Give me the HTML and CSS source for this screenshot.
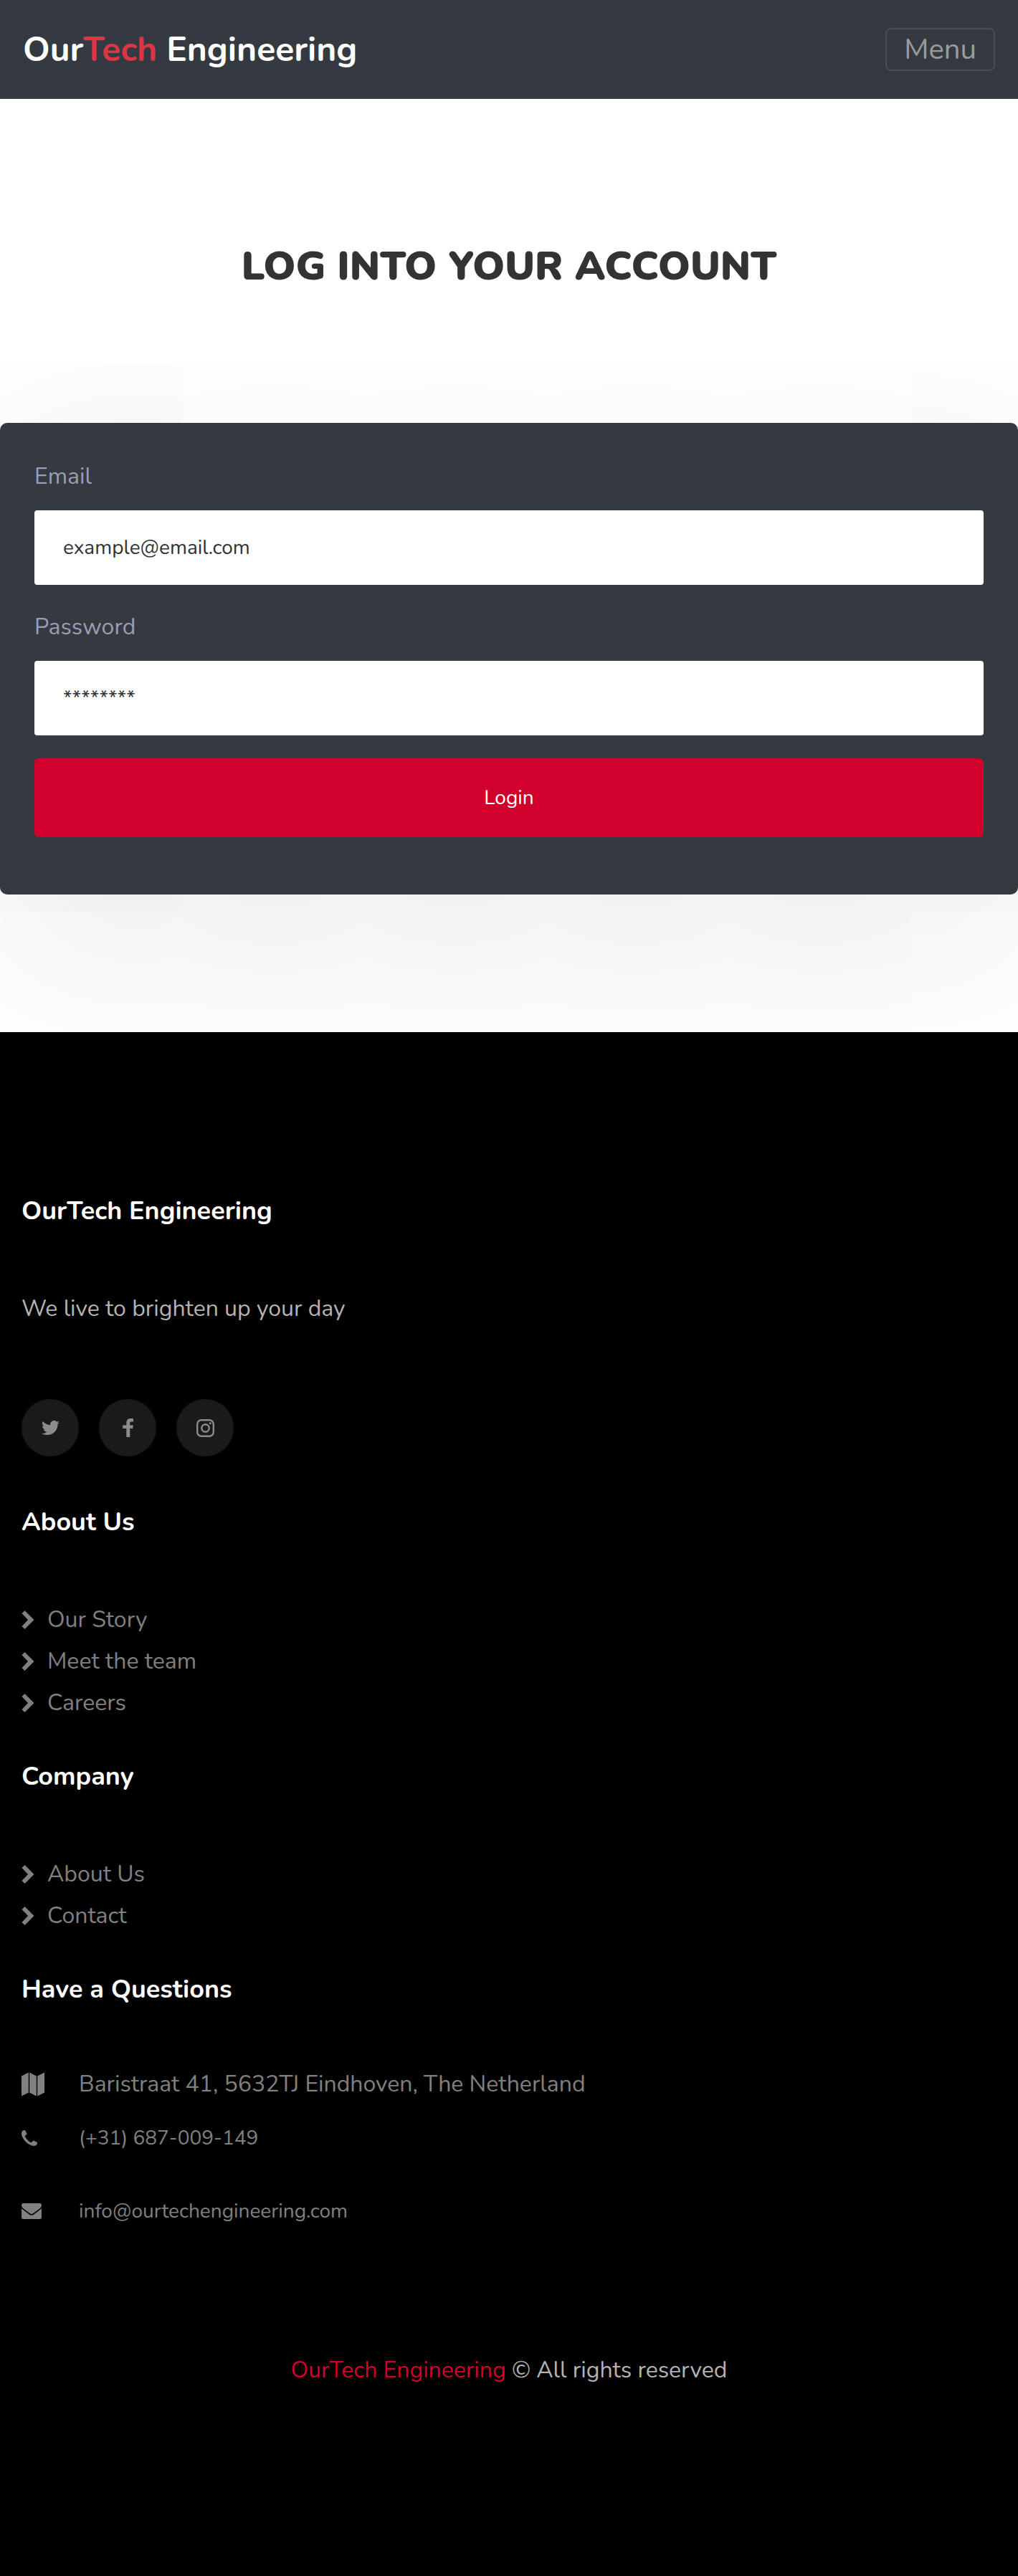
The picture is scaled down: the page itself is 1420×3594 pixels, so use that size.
FILE: index.html
```html
<!DOCTYPE html>
<html lang="en">
<head>
  <meta charset="utf-8">
  <meta name="viewport" content="width=device-width, initial-scale=1">
  <title>OurTech Engineering – Login</title>
  <link rel="stylesheet" href="styles.css">
</head>
<body>
  <svg class="sprite" aria-hidden="true">
    <symbol id="chevron" viewBox="0 0 17 26"><path d="M0 4 4 0 17 13 4 26 0 22 8.500 13z"/></symbol>
  </svg>

  <header class="navbar">
    <a class="brand" href="#">Our<span class="brand-accent">Tech</span> Engineering</a>
    <button class="menu-button" type="button">Menu</button>
  </header>

  <main class="login">
    <h1 class="login-title">LOG INTO YOUR ACCOUNT</h1>
    <form class="login-card">
      <div class="field">
        <label class="field-label" for="email">Email</label>
        <input class="field-input" id="email" type="email" placeholder="example@email.com">
      </div>
      <div class="field">
        <label class="field-label" for="password">Password</label>
        <input class="field-input" id="password" type="password" placeholder="********">
      </div>
      <button class="login-button" type="submit">Login</button>
    </form>
  </main>

  <footer class="footer">
    <section class="block">
      <h2 class="block-title">OurTech Engineering</h2>
      <p class="tagline">We live to brighten up your day</p>
      <ul class="social">
        <li><a class="social-link" href="#" aria-label="Twitter">
          <svg width="25" height="20" viewBox="0 0 25 20"><path d="M25 2.400a10 10 0 0 1-3 .8A5 5 0 0 0 24.200.4a10 10 0 0 1-3.200 1.200A5.100 5.100 0 0 0 12.300 6.200 14.500 14.500 0 0 1 1.700 1a5.100 5.100 0 0 0 1.600 6.800A5 5 0 0 1 1 7.200a5.100 5.100 0 0 0 4.100 5 5 5 0 0 1-2.300.1 5.100 5.100 0 0 0 4.800 3.500A10.300 10.300 0 0 1 0 17.900 14.500 14.500 0 0 0 7.900 20C17.300 20 22.500 12.200 22.500 5.500v-.7A10 10 0 0 0 25 2.400z"/></svg>
        </a></li>
        <li><a class="social-link" href="#" aria-label="Facebook">
          <svg width="15" height="26" viewBox="0 0 15 26"><path d="M15 .2v4.200h-2.500c-1.900 0-2.300.9-2.300 2.200v2.900h4.600l-.6 4.500h-4V26H5.300V14H.2V9.500h5.100V6C5.300 2.100 7.700 0 11.300 0c1.700 0 3.200.1 3.700.2z"/></svg>
        </a></li>
        <li><a class="social-link" href="#" aria-label="Instagram">
          <svg width="25" height="25" viewBox="0 0 25 25"><rect class="line" x="1.200" y="1.200" width="22.600" height="22.600" rx="5.800"/><circle class="line" cx="12.500" cy="12.500" r="5.200"/><circle cx="19.200" cy="5.800" r="1.500"/></svg>
        </a></li>
      </ul>
    </section>

    <section class="block">
      <h2 class="block-title">About Us</h2>
      <ul class="links">
        <li><a class="link" href="#"><svg class="chevron"><use href="#chevron"/></svg>Our Story</a></li>
        <li><a class="link" href="#"><svg class="chevron"><use href="#chevron"/></svg>Meet the team</a></li>
        <li><a class="link" href="#"><svg class="chevron"><use href="#chevron"/></svg>Careers</a></li>
      </ul>
    </section>

    <section class="block">
      <h2 class="block-title">Company</h2>
      <ul class="links">
        <li><a class="link" href="#"><svg class="chevron"><use href="#chevron"/></svg>About Us</a></li>
        <li><a class="link" href="#"><svg class="chevron"><use href="#chevron"/></svg>Contact</a></li>
      </ul>
    </section>

    <section class="block">
      <h2 class="block-title block-title-contacts">Have a Questions</h2>
      <address class="contacts">
        <div class="contact">
          <span class="contact-icon"><svg width="32" height="34" viewBox="0 0 32 34"><path d="M0 5.500 9.800.5v28L0 33.500zM11.200.5l9.600 5v28l-9.600-5zM22.200 5.500 32 .5v28l-9.800 5z"/></svg></span>
          <span>Baristraat 41, 5632TJ Eindhoven, The Netherland</span>
        </div>
        <a class="contact contact-phone" href="tel:+31687009149">
          <span class="contact-icon"><svg width="22" height="22" viewBox="0 0 22 22"><path d="M22 17.400c0 .9-.4 2.300-.7 2.900-.5 1.100-2.800 1.700-4.300 1.700-1.900 0-3.700-.9-5.400-1.700C7.100 17.900 4.100 14.900 1.700 10.400.900 8.700 0 6.900 0 5 0 3.500.6 1.200 1.700.7 2.300.4 3.700 0 4.600 0c.5 0 1.100 1.300 1.600 2.400.5 1 1.300 2.300 1.300 2.900C7.500 6.500 4.800 7.300 4.800 8.300c0 1.300 2.700 4.500 4.400 6.200 1.200 1.100 3.200 2.700 4.500 2.700 1 0 1.800-2.700 3-2.700.6 0 1.900.8 2.900 1.300 1.100.6 2.400 1.100 2.400 1.600z"/></svg></span>
          <span>(+31) 687-009-149</span>
        </a>
        <a class="contact contact-mail" href="mailto:info@ourtechengineering.com">
          <span class="contact-icon"><svg width="28" height="22" viewBox="0 0 28 22"><path d="M2.500 0h23Q28 0 28 2.500C28 5 26.300 6.600 24.500 8L16 14.300q-2 1.300-4 0L3.500 8C1.700 6.600 0 5 0 2.500Q0 0 2.500 0zM0 7.300Q.8 8.200 11 15.700q3 1.700 6 0Q27.200 8.200 28 7.300V19.500Q28 22 25.500 22h-23Q0 22 0 19.500z"/></svg></span>
          <span>info@ourtechengineering.com</span>
        </a>
      </address>
    </section>

    <p class="copyright"><a class="copyright-link" href="#">OurTech Engineering</a> © All rights reserved</p>
  </footer>
</body>
</html>
```
FILE: styles.css
```css
* {
  box-sizing: border-box;
}

body {
  margin: 0;
  background: #fff;
  color: #333;
  font: 400 32px/58px Nunito, "Nunito Sans", Lato, sans-serif;
}

h1, h2, p, ul {
  margin: 0;
  padding: 0;
}

ul {
  list-style: none;
}

a {
  color: inherit;
  text-decoration: none;
}

input, button {
  font: inherit;
}

svg {
  display: block;
  fill: currentColor;
}

.sprite {
  position: absolute;
  width: 0;
  height: 0;
}

/* Top bar */
.navbar {
  position: relative;
  z-index: 1;
  display: flex;
  align-items: center;
  justify-content: space-between;
  padding: 34px 32px;
  background: #343a40;
}

.brand {
  color: #fff;
  font-size: 48px;
  font-weight: 700;
  line-height: 70px;
}

.brand-accent {
  color: #dc3545;
}

.menu-button {
  padding: 0 24px;
  border: 2px solid rgba(255, 255, 255, 0.1);
  border-radius: 8px;
  background: transparent;
  color: rgba(255, 255, 255, 0.5);
  font-size: 40px;
  line-height: 56px;
}

/* Login form */
.login {
  padding: 200px 0 192px;
}

.login-title {
  margin-bottom: 184px;
  font-size: 56px;
  font-weight: 900;
  line-height: 68px;
  text-align: center;
}

.login-card {
  padding: 46px 48px 80px;
  border-radius: 10px;
  background: #343a40;
  box-shadow: 0 60px 340px rgba(0, 0, 0, 0.1);
}

.field {
  margin-bottom: 30px;
}

.field-label {
  display: block;
  margin-bottom: 18px;
  color: #9a9cb8;
}

.field-input {
  display: block;
  width: 100%;
  height: 104px;
  padding: 0 40px;
  border: 0;
  border-radius: 4px;
  background: #fff;
  font-size: 28px;
}

.field-input::placeholder {
  color: #333;
  opacity: 1;
}

.login-button {
  display: block;
  width: 100%;
  height: 110px;
  margin-top: 32px;
  border: 0;
  border-radius: 6px;
  background: #d1002a;
  color: #fff;
  font-size: 28px;
}

/* Footer */
.footer {
  position: relative;
  padding: 230px 30px 258px;
  background: #000;
  color: #808080;
}

.block {
  margin-bottom: 54px;
}

.block-title {
  margin-bottom: 87px;
  color: #fff;
  font-size: 36px;
  font-weight: 700;
  line-height: 40px;
}

.block-title-contacts {
  margin-bottom: 83px;
}

.tagline {
  margin-bottom: 97px;
  color: #b3b3b3;
}

.social {
  display: flex;
  gap: 28px;
  margin-bottom: 72px;
}

.social-link {
  display: flex;
  align-items: center;
  justify-content: center;
  width: 80px;
  height: 80px;
  border-radius: 50%;
  background: #1a1a1a;
  color: #8c8c8c;
}

.line {
  fill: none;
  stroke: currentColor;
  stroke-width: 2.4;
}

.link {
  display: flex;
  align-items: center;
  gap: 18px;
}

.chevron {
  width: 18px;
  height: 26px;
}

.contacts {
  font-style: normal;
}

.contact {
  display: flex;
  align-items: center;
}

.contact-icon {
  width: 80px;
}

.contact-phone,
.contact-mail {
  font-size: 28px;
  line-height: 50px;
}

.contact-phone {
  margin: 21px 0 52px;
}

.copyright {
  margin-top: 168px;
  color: #b3b3b3;
  text-align: center;
}

.copyright-link {
  color: #d1002a;
}
```
